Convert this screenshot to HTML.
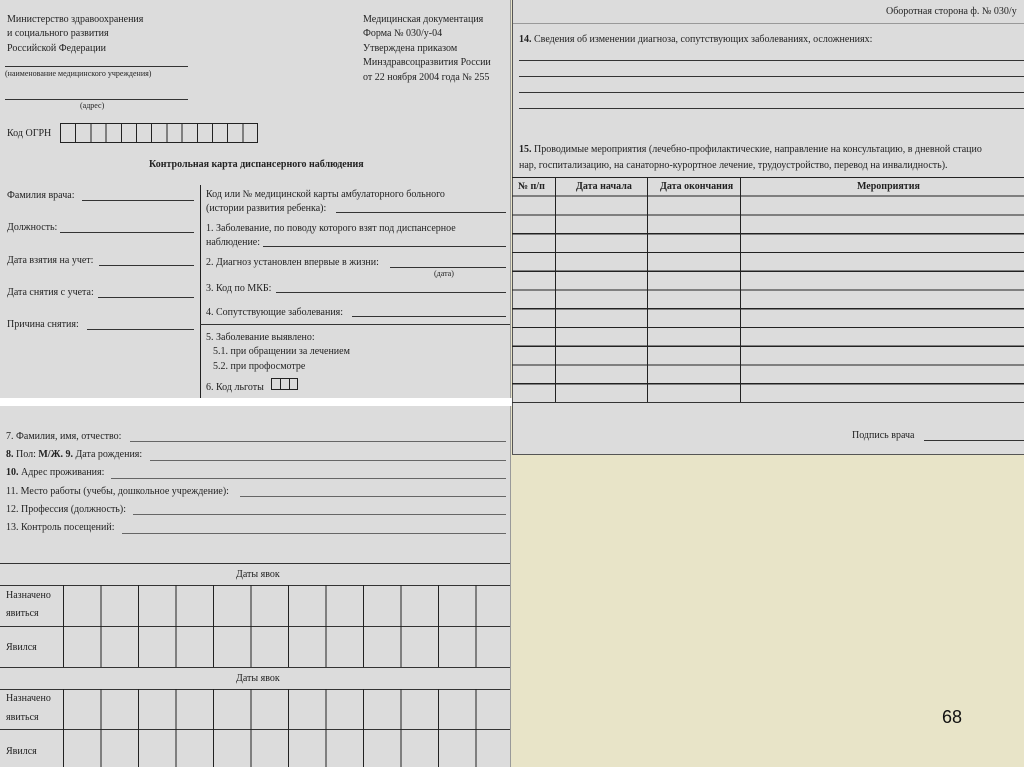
<!DOCTYPE html>
<html><head><meta charset="utf-8"><style>
body{margin:0;width:1024px;height:767px;position:relative;overflow:hidden;background:#e8e4c8;font-family:"Liberation Serif","DejaVu Serif",serif;color:#222}
.p{position:absolute;background:#dcdcdc}
.t{position:absolute;font-size:10px;white-space:nowrap;line-height:12px;color:#222}
.b{font-weight:bold}
.l{position:absolute;height:1px;background:#333}
.v{position:absolute;width:1px;background:#222}
</style></head><body>
<div class="p" style="left:0;top:0;width:510px;height:398px;border-right:1px solid #999"></div>
<div style="position:absolute;left:0;top:398px;width:512px;height:8px;background:#fff"></div>
<div class="t" style="left:7px;top:14px">Министерство здравоохранения</div>
<div class="t" style="left:7px;top:28px">и социального развития</div>
<div class="t" style="left:7px;top:43px">Российской Федерации</div>
<div class="l" style="left:5px;top:66px;width:183px"></div>
<div class="t" style="left:5px;top:68px;font-size:8px">(наименование медицинского учреждения)</div>
<div class="l" style="left:5px;top:99px;width:183px"></div>
<div class="t" style="left:80px;top:100px;font-size:8px">(адрес)</div>
<div class="t" style="left:363px;top:14px">Медицинская документация</div>
<div class="t" style="left:363px;top:28px">Форма № 030/у-04</div>
<div class="t" style="left:363px;top:43px">Утверждена приказом</div>
<div class="t" style="left:363px;top:57px">Минздравсоцразвития России</div>
<div class="t" style="left:363px;top:72px">от 22 ноября 2004 года № 255</div>
<div class="t" style="left:7px;top:128px">Код ОГРН</div>
<div style="position:absolute;left:60px;top:123px;width:198px;height:20px;border:1px solid #222;box-sizing:border-box;background:repeating-linear-gradient(90deg,transparent 0 14.2px,#222 14.2px 15.2px)"></div>
<div class="t b" style="left:149px;top:159px">Контрольная карта диспансерного наблюдения</div>
<div class="v" style="left:200px;top:185px;height:213px"></div>
<div class="t" style="left:7px;top:190px">Фамилия врача:</div><div class="l" style="left:82px;top:200px;width:112px"></div>
<div class="t" style="left:7px;top:222px">Должность:</div><div class="l" style="left:60px;top:232px;width:134px"></div>
<div class="t" style="left:7px;top:255px">Дата взятия на учет:</div><div class="l" style="left:99px;top:265px;width:95px"></div>
<div class="t" style="left:7px;top:287px">Дата снятия с учета:</div><div class="l" style="left:98px;top:297px;width:96px"></div>
<div class="t" style="left:7px;top:319px">Причина снятия:</div><div class="l" style="left:87px;top:329px;width:107px"></div>
<div class="t" style="left:206px;top:189px">Код или № медицинской карты амбулаторного больного</div>
<div class="t" style="left:206px;top:203px">(истории развития ребенка):</div><div class="l" style="left:336px;top:212px;width:170px"></div>
<div class="t" style="left:206px;top:223px">1. Заболевание, по поводу которого взят под диспансерное</div>
<div class="t" style="left:206px;top:237px">наблюдение:</div><div class="l" style="left:263px;top:246px;width:243px"></div>
<div class="t" style="left:206px;top:257px">2. Диагноз установлен впервые в жизни:</div><div class="l" style="left:390px;top:267px;width:116px"></div>
<div class="t" style="left:434px;top:268px;font-size:8px">(дата)</div>
<div class="t" style="left:206px;top:283px">3. Код по МКБ:</div><div class="l" style="left:276px;top:292px;width:230px"></div>
<div class="t" style="left:206px;top:307px">4. Сопутствующие заболевания:</div><div class="l" style="left:352px;top:316px;width:154px"></div>
<div class="l" style="left:200px;top:324px;width:310px"></div>
<div class="t" style="left:206px;top:332px">5. Заболевание выявлено:</div>
<div class="t" style="left:213px;top:346px">5.1. при обращении за лечением</div>
<div class="t" style="left:213px;top:361px">5.2. при профосмотре</div>
<div class="t" style="left:206px;top:382px">6. Код льготы</div>
<div style="position:absolute;left:271px;top:378px;width:27px;height:12px;border:1px solid #222;box-sizing:border-box;background:repeating-linear-gradient(90deg,transparent 0 8px,#222 8px 9px)"></div>

<div class="p" style="left:512px;top:0;width:512px;height:455px;border-left:1px solid #555;border-bottom:1px solid #555;box-sizing:border-box"></div>
<div class="t" style="left:886px;top:6px">Оборотная сторона ф. № 030/у</div>
<div class="l" style="left:513px;top:23px;width:511px;background:#999"></div>
<div class="t" style="left:519px;top:34px"><b>14.</b> Сведения об изменении диагноза, сопутствующих заболеваниях, осложнениях:</div>
<div class="l" style="left:519px;top:60px;width:505px"></div>
<div class="l" style="left:519px;top:76px;width:505px"></div>
<div class="l" style="left:519px;top:92px;width:505px"></div>
<div class="l" style="left:519px;top:108px;width:505px"></div>
<div class="t" style="left:519px;top:144px"><b>15.</b> Проводимые мероприятия (лечебно-профилактические, направление на консультацию, в дневной стацио</div>
<div class="t" style="left:519px;top:160px">нар, госпитализацию, на санаторно-курортное лечение, трудоустройство, перевод на инвалидность).</div>
<div style="position:absolute;left:512px;top:177px;width:512px;height:226px;background:repeating-linear-gradient(180deg,#222 0 1px,transparent 1px 18.75px)"></div>
<div class="l" style="left:512px;top:402px;width:512px"></div>
<div class="v" style="left:555px;top:177px;height:225px"></div>
<div class="v" style="left:647px;top:177px;height:225px"></div>
<div class="v" style="left:740px;top:177px;height:225px"></div>
<div class="t b" style="left:518px;top:181px">№ п/п</div>
<div class="t b" style="left:576px;top:181px">Дата начала</div>
<div class="t b" style="left:660px;top:181px">Дата окончания</div>
<div class="t b" style="left:857px;top:181px">Мероприятия</div>
<div class="t" style="left:852px;top:430px">Подпись врача</div><div class="l" style="left:924px;top:440px;width:100px"></div>

<div class="p" style="left:0;top:406px;width:510px;height:361px;border-right:1px solid #999"></div>
<div class="t" style="left:6px;top:431px">7. Фамилия, имя, отчество:</div><div class="l" style="left:130px;top:441px;width:376px;background:#666"></div>
<div class="t" style="left:6px;top:449px"><b>8.</b> Пол: <b>М/Ж. 9.</b> Дата рождения:</div><div class="l" style="left:150px;top:460px;width:356px;background:#666"></div>
<div class="t" style="left:6px;top:467px"><b>10.</b> Адрес проживания:</div><div class="l" style="left:111px;top:478px;width:395px;background:#666"></div>
<div class="t" style="left:6px;top:486px">11. Место работы (учебы, дошкольное учреждение):</div><div class="l" style="left:240px;top:496px;width:266px;background:#666"></div>
<div class="t" style="left:6px;top:504px">12. Профессия (должность):</div><div class="l" style="left:133px;top:514px;width:373px;background:#666"></div>
<div class="t" style="left:6px;top:522px">13. Контроль посещений:</div><div class="l" style="left:122px;top:533px;width:384px;background:#666"></div>
<div class="l" style="left:0;top:563px;width:510px"></div>
<div class="t" style="left:236px;top:569px">Даты явок</div>
<div class="l" style="left:0;top:585px;width:510px"></div>
<div class="l" style="left:0;top:626px;width:510px"></div>
<div class="l" style="left:0;top:667px;width:510px"></div>
<div class="t" style="left:236px;top:673px">Даты явок</div>
<div class="l" style="left:0;top:689px;width:510px"></div>
<div class="l" style="left:0;top:729px;width:510px"></div>
<div style="position:absolute;left:63px;top:585px;width:448px;height:82px;background:repeating-linear-gradient(90deg,#222 0 1px,transparent 1px 37.5px)"></div>
<div style="position:absolute;left:63px;top:689px;width:448px;height:78px;background:repeating-linear-gradient(90deg,#222 0 1px,transparent 1px 37.5px)"></div>
<div class="t" style="left:6px;top:590px">Назначено</div>
<div class="t" style="left:6px;top:608px">явиться</div>
<div class="t" style="left:6px;top:642px">Явился</div>
<div class="t" style="left:6px;top:693px">Назначено</div>
<div class="t" style="left:6px;top:712px">явиться</div>
<div class="t" style="left:6px;top:746px">Явился</div>

<div style="position:absolute;left:942px;top:707px;font:18px 'Liberation Sans',sans-serif;color:#111">68</div>
</body></html>
